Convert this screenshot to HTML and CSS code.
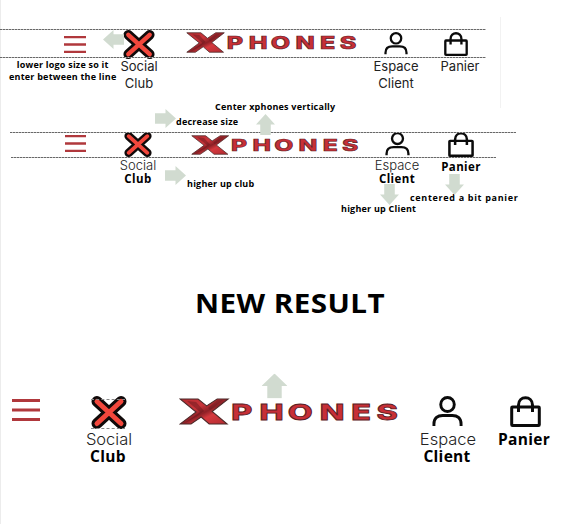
FILE: index.html
```html
<!DOCTYPE html>
<html lang="en">
<head>
<meta charset="utf-8">
<title>Header revisions</title>
<link rel="stylesheet" href="styles.css">
</head>
<body>
<svg class="defs" aria-hidden="true">
  <defs>
    <linearGradient id="red" x1="0" y1="0" x2="1" y2="1"><stop offset="0" stop-color="#b52c31"/><stop offset=".35" stop-color="#c9343a"/><stop offset=".52" stop-color="#8d2026"/><stop offset=".65" stop-color="#d5393e"/><stop offset="1" stop-color="#b02a30"/></linearGradient>
    <symbol id="menu" viewBox="0 0 28 22" preserveAspectRatio="none"><path d="M0 1.500H28M0 11H28M0 20.500H28" stroke="#b0383c" stroke-width="3"/></symbol>
    <symbol id="cross" viewBox="0 0 36 33" preserveAspectRatio="none"><path d="M6 5.500L30 27.500M30 5.500L6 27.500" stroke="#100a0a" stroke-width="11" stroke-linecap="round"/><path d="M6 5.500L30 27.500M30 5.500L6 27.500" stroke="#f2473c" stroke-width="5" stroke-linecap="round"/></symbol>
    <symbol id="user" viewBox="0 0 32 31" preserveAspectRatio="none"><g fill="none" stroke="#0b0b0b" stroke-width="3"><circle cx="16" cy="8.500" r="7"/><path d="M2 30V28C2 22 6 19.500 11 19.500H21C26 19.500 30 22 30 28V30"/></g></symbol>
    <symbol id="bag" viewBox="0 0 31 31" preserveAspectRatio="none"><g fill="none" stroke="#0b0b0b" stroke-width="3"><rect x="1.700" y="11" width="27.600" height="18.500" rx=".8"/><path d="M8.500 16V9C8.500-.8 22.500-.8 22.500 9V16"/></g></symbol>
    <symbol id="logo" viewBox="0 0 220 27" preserveAspectRatio="none">
      <path d="M1 1H19L27.500 8L38 1H49L33 13.500L48 26H30L22 19L12 26H1L17 14Z" fill="url(#red)" stroke="#4b2929" stroke-width="1"/>
      <path d="M8 3L21 14L6 25L18 18L25 13L17 4Z" fill="#54151a" opacity=".4"/>
      <path d="M38 2L29 10L31 12L44 2Z" fill="#5f191e" opacity=".4"/>
      <text class="wordmark" transform="scale(1.46 1)" y="22" x="35.700 54.900 74.200 95.900 117.500 134.600">PHONES</text>
    </symbol>
    <symbol id="arrow" viewBox="0 0 22 18" preserveAspectRatio="none"><path d="M0 4H11V0L22 9L11 18V14H0Z" fill="#d1dbd0"/></symbol>
  </defs>
</svg>
<main class="sheet">
  <section class="strip before">
    <div class="item"><svg class="menu"><use href="#menu"/></svg></div>
    <div class="item"><svg class="cross"><use href="#cross"/></svg><span class="label">Social</span><span class="label">Club</span></div>
    <div class="item"><svg class="logo"><use href="#logo"/></svg></div>
    <div class="item"><svg class="user"><use href="#user"/></svg><span class="label">Espace</span><span class="label">Client</span></div>
    <div class="item"><svg class="bag"><use href="#bag"/></svg><span class="label">Panier</span></div>
    <i class="rail top"></i><i class="rail bottom"></i>
  </section>
  <section class="strip edit">
    <div class="item"><svg class="menu"><use href="#menu"/></svg></div>
    <div class="item"><svg class="cross"><use href="#cross"/></svg><span class="label">Social</span><b class="label">Club</b></div>
    <div class="item"><svg class="logo"><use href="#logo"/></svg></div>
    <div class="item"><svg class="user"><use href="#user"/></svg><span class="label">Espace</span><b class="label">Client</b></div>
    <div class="item"><svg class="bag"><use href="#bag"/></svg><b class="label">Panier</b></div>
    <i class="rail top"></i><i class="rail bottom"></i>
  </section>
  <h1>NEW RESULT</h1>
  <section class="strip after">
    <div class="item"><svg class="menu"><use href="#menu"/></svg></div>
    <div class="item"><svg class="cross"><use href="#cross"/></svg><span class="label">Social</span><b class="label">Club</b></div>
    <div class="item"><svg class="logo"><use href="#logo"/></svg></div>
    <div class="item"><svg class="user"><use href="#user"/></svg><span class="label">Espace</span><b class="label">Client</b></div>
    <div class="item"><svg class="bag"><use href="#bag"/></svg><b class="label">Panier</b></div>
  </section>

  <i class="guide"></i>
  <i class="marks"></i>
  <p class="note lower">lower logo size so it<br>enter between the line</p>
  <p class="note center">Center xphones vertically</p>
  <p class="note decrease">decrease size</p>
  <p class="note club">higher up club</p>
  <p class="note client">higher up Client</p>
  <p class="note panier">centered a bit panier</p>
  <svg class="arrow a1"><use href="#arrow"/></svg>
  <svg class="arrow a2"><use href="#arrow"/></svg>
  <svg class="arrow a3"><use href="#arrow"/></svg>
  <svg class="arrow a4"><use href="#arrow"/></svg>
  <svg class="arrow a5"><use href="#arrow"/></svg>
  <svg class="arrow a6"><use href="#arrow"/></svg>
  <svg class="arrow a7"><use href="#arrow"/></svg>
</main>
</body>
</html>
```
FILE: styles.css
```css
* { box-sizing: border-box; }
body { margin: 0; background: #fff; color: #000; font-family: "Open Sans", sans-serif; }
.defs { position: absolute; width: 0; height: 0; }
.sheet { position: relative; width: 564px; height: 524px; overflow: hidden; padding-top: 29px; }
.sheet::before { content: ""; position: absolute; left: 0; top: 0; width: 1px; height: 100%; background: #ececec; }
.strip { position: relative; display: grid; align-items: start; }
.item { display: flex; flex-direction: column; align-items: center; justify-self: center; width: 0; }
.item svg { flex: none; display: block; }
.label { flex: none; white-space: nowrap; font-family: Inter, sans-serif; font-weight: 400; color: #222; }
b.label { font-family: "Open Sans", sans-serif; font-weight: 700; color: #000; }
.wordmark { font-family: Inter, sans-serif; font-size: 22px; font-weight: 800; fill: #c72f36; stroke: #5a2024; stroke-width: .8px; }

.before { height: 103px; padding-left: 43px; grid-template-columns: 64px 64px 202px 46px 82px; }
.before .menu { width: 22px; height: 17px; margin-top: 7px; }
.before .cross { width: 32px; height: 29px; margin: 1px 0 -1px; }
.before .logo { width: 172px; height: 21px; margin-top: 3px; }
.before .user { width: 24px; height: 23px; margin: 3px 0; }
.before .bag { width: 24px; height: 24px; margin: 3px 8px 2px 0; }
.before .label { font-size: 13px; line-height: 17px; }

.edit { height: 151px; padding-left: 43px; grid-template-columns: 64px 62px 213px 30px 98px; }
.edit .menu { width: 21px; height: 17px; margin-top: 3px; }
.edit .cross { width: 28px; height: 25px; margin-bottom: 2px; }
.edit .logo { width: 169px; height: 20px; margin-top: 3px; }
.edit .user { width: 25px; height: 24px; margin-bottom: 3px; }
.edit .bag { width: 26px; height: 25px; margin-bottom: 3px; }
.edit .label { font-size: 13px; line-height: 13px; font-weight: 300; }
.edit b.label { font-size: 11.5px; font-weight: 700; letter-spacing: .4px; }

.rail { position: absolute; height: 1px; background: repeating-linear-gradient(90deg, #686868 0 2px, #bbb 2px 3px); }
.before .rail { left: 0; width: 486px; }
.before .rail.top { top: 0; }
.before .rail.bottom { top: 28px; }
.edit .rail.top { left: 10px; top: 0; width: 506px; }
.edit .rail.bottom { left: 11px; top: 25px; width: 485px; }

h1 { margin: 0; height: 113px; padding-left: 178px; font-size: 27px; line-height: 40px; font-weight: 700; letter-spacing: .4px; white-space: nowrap; transform: scaleX(1.096); transform-origin: 0 0; }
.after { padding-left: 0; grid-template-columns: 52px 113px 249px 67px 87px; }
.after .menu { width: 28px; height: 22px; margin-top: 3px; }
.after .cross { width: 36px; height: 33px; margin-bottom: 2px; }
.after .logo { width: 221px; height: 27px; margin-top: 2px; }
.after .user { width: 31px; height: 31px; margin-bottom: 4px; }
.after .bag { width: 31px; height: 31px; margin: 0 0 4px 2px; }
.after .label { font-size: 16.5px; line-height: 17px; font-weight: 300; margin-left: 1px; }
.after b.label { font-size: 15.5px; font-weight: 700; margin-left: -1px; letter-spacing: .3px; }

.guide { position: absolute; left: 500px; top: 17px; width: 1px; height: 91px; background: #f2f2f2; }
.marks { position: absolute; left: 91px; top: 399px; width: 34px; height: 30px; border: dashed #888; border-width: 1px 0; }
.note { position: absolute; margin: 0; font-size: 9px; line-height: 12px; font-weight: 700; letter-spacing: .22px; white-space: nowrap; }
.lower { left: 9px; top: 59px; text-align: center; }
.center { left: 215px; top: 101px; }
.decrease { left: 176px; top: 116px; }
.club { left: 187px; top: 178px; }
.client { left: 341px; top: 203px; }
.panier { left: 410px; top: 192px; letter-spacing: .68px; }
.arrow { position: absolute; width: 21px; height: 19px; }
.a1 { left: 103px; top: 30px; transform: scaleX(-1); }
.a2 { left: 155px; top: 109px; }
.a3 { left: 165px; top: 166px; }
.a4 { left: 255px; top: 115px; transform: rotate(-90deg); }
.a5 { left: 379px; top: 185px; transform: rotate(90deg); }
.a6 { left: 444px; top: 175px; transform: rotate(90deg); }
.a7 { left: 262px; top: 373px; width: 25px; height: 26px; transform: rotate(-90deg); }
```
